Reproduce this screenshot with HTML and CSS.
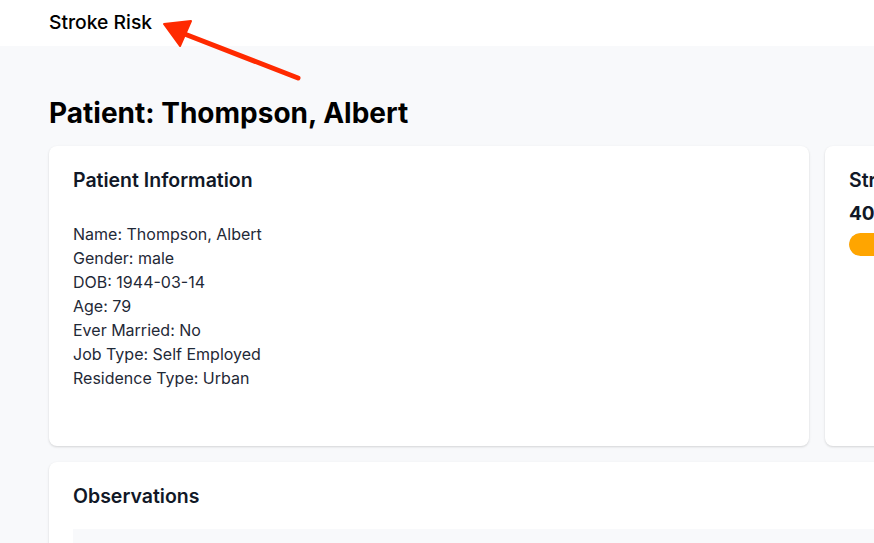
FILE: index.html
```html
<!DOCTYPE html>
<html>
<head>
<meta charset="utf-8">
<link rel="stylesheet" href="styles.css">
</head>
<body>
<header class="topbar">
  <span class="brand">Stroke Risk</span>
</header>
<svg class="annot" width="320" height="100" viewBox="0 0 320 100">
  <line x1="298" y1="78" x2="182" y2="33" stroke="#ff2a00" stroke-width="5" stroke-linecap="round"/>
  <polygon points="164,24 191,21 180,46" fill="#ff2a00" stroke="#ff2a00" stroke-width="2" stroke-linejoin="round"/>
</svg>
<main class="page">
  <h1 class="title">Patient: Thompson, Albert</h1>
  <div class="row">
    <section class="card info">
      <h2 class="card-title">Patient Information</h2>
      <ul class="facts">
        <li>Name: Thompson, Albert</li>
        <li>Gender: male</li>
        <li>DOB: 1944-03-14</li>
        <li>Age: 79</li>
        <li>Ever Married: No</li>
        <li>Job Type: Self Employed</li>
        <li>Residence Type: Urban</li>
      </ul>
    </section>
    <section class="card risk">
      <h2 class="card-title">Stroke Risk</h2>
      <div class="score">40%</div>
      <div class="bar"><div class="bar-fill" style="width:40%"></div></div>
    </section>
  </div>
  <section class="card obs">
    <h2 class="card-title">Observations</h2>
    <div class="obs-box"></div>
  </section>
</main>
</body>
</html>
```
FILE: styles.css
```css
html, body { margin: 0; padding: 0; overflow: hidden; }
body {
  background: #f8f9fb;
  font-family: Inter, "Noto Sans", sans-serif;
  color: #1f2937;
  width: 874px;
  height: 543px;
  position: relative;
}
.topbar {
  background: #ffffff;
  height: 46px;
  display: flex;
  align-items: center;
  padding-left: 49px;
}
.brand {
  font-size: 19.3px;
  font-weight: 500;
  color: #000;
  margin-top: -2px;
}
.annot {
  position: absolute;
  left: 0;
  top: 0;
}
.page {
  padding: 50px 0 0 49px;
  width: 1200px;
}
.title {
  margin: 0 0 16px 0;
  font-size: 28px;
  font-weight: 700;
  color: #000;
  line-height: 34px;
}
.row {
  display: flex;
  gap: 16px;
  margin-bottom: 16px;
}
.card {
  background: #fff;
  border-radius: 8px;
  box-shadow: 0 1px 3px rgba(0,0,0,0.1), 0 1px 2px rgba(0,0,0,0.06);
  padding: 24px;
  box-sizing: border-box;
}
.info { width: 760px; height: 300px; }
.risk { width: 380px; height: 300px; }
.card-title {
  margin: 0;
  font-size: 19.5px;
  font-weight: 600;
  color: #111827;
  line-height: 20px;
}
.facts {
  list-style: none;
  margin: 32px 0 0 0;
  padding: 0;
  font-size: 16px;
  line-height: 24px;
  color: #1f2937;
}
.score {
  margin-top: 14px;
  font-size: 19px;
  font-weight: 700;
  color: #111827;
  line-height: 20px;
}
.bar {
  margin-top: 9px;
  height: 23px;
  border-radius: 12px;
  background: #e5e7eb;
  overflow: hidden;
}
.bar-fill {
  height: 100%;
  background: #ffa500;
  border-radius: 12px;
}
.obs { width: 1156px; height: 300px; }
.obs-box {
  margin-top: 23px;
  height: 200px;
  background: #f8f9fb;
}
```
